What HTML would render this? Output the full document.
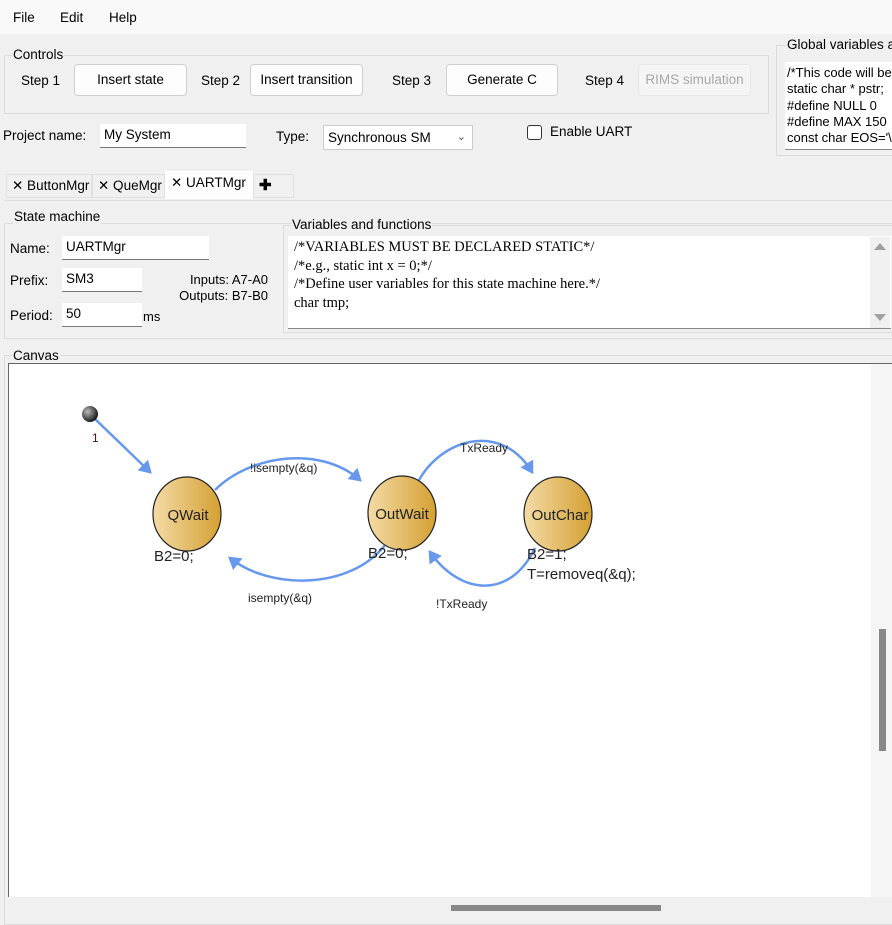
<!DOCTYPE html>
<html><head><style>
*{box-sizing:border-box}
body{margin:0;width:892px;height:920px;background:#f0f0f0;font-family:"Liberation Sans",sans-serif;font-size:13.5px;color:#000;position:relative;overflow:hidden}
div{white-space:nowrap}
.a{position:absolute}
.btn{position:absolute;background:#fdfdfd;border:1px solid #d0d0d0;border-radius:4px;text-align:center;line-height:30px;font-size:13.5px}
.gb{position:absolute;border:1px solid #dcdcdc}
.gl{position:absolute;background:#f0f0f0;padding:0 1px;font-size:13.5px;line-height:14px}
.in{position:absolute;background:#fff;border-bottom:1px solid #7a7a7a;padding-left:4px;font-size:13.5px}
.tab{position:absolute;top:174px;height:24px;border:1px solid #e0e0e0;background:#f0f0f0;font-size:13.5px;line-height:22px;padding-left:5px;overflow:hidden}
.serif{font-family:"Liberation Serif",serif;font-size:14.5px;line-height:18.5px}
</style></head><body>
<div class="a" style="left:0;top:0;width:892px;height:34px;background:#f9f9f9"></div>
<div class="a" style="left:13px;top:10px">File</div>
<div class="a" style="left:60px;top:10px">Edit</div>
<div class="a" style="left:109px;top:10px">Help</div>

<div class="gb" style="left:4px;top:55px;width:765px;height:59px"></div>
<div class="gl" style="left:12px;top:48px">Controls</div>
<div class="a" style="left:21px;top:73px">Step 1</div>
<div class="btn" style="left:74px;top:64px;width:113px;height:32px">Insert state</div>
<div class="a" style="left:201px;top:73px">Step 2</div>
<div class="btn" style="left:250px;top:64px;width:113px;height:32px">Insert transition</div>
<div class="a" style="left:392px;top:73px">Step 3</div>
<div class="btn" style="left:446px;top:64px;width:112px;height:32px">Generate C</div>
<div class="a" style="left:585px;top:73px">Step 4</div>
<div class="btn" style="left:638px;top:64px;width:113px;height:32px;background:#f5f5f5;border-color:#e6e6e6;color:#a8a8a8">RIMS simulation</div>

<div class="gb" style="left:776px;top:45px;width:130px;height:111px"></div>
<div class="gl" style="left:786px;top:38px">Global variables and</div>
<div class="a" style="left:785px;top:62px;width:107px;height:88px;background:#fff;border-bottom:1px solid #888;font-size:13px;line-height:16.3px;padding:3px 0 0 2px;overflow:hidden">/*This code will be<br>static char * pstr;<br>#define NULL 0<br>#define MAX 150<br>const char EOS='\</div>

<div class="a" style="left:3px;top:128px">Project name:</div>
<div class="in" style="left:100px;top:124px;width:146px;height:24px;line-height:22px">My System</div>
<div class="a" style="left:276px;top:129px">Type:</div>
<div class="a" style="left:323px;top:125px;width:150px;height:25px;background:#fff;border:1px solid #ccc;line-height:23px;padding-left:4px">Synchronous SM<span style="position:absolute;right:6px;top:0;color:#555;font-size:11px">&#8964;</span></div>
<div class="a" style="left:527px;top:125px;width:15px;height:15px;border:1px solid #333;border-radius:3px;background:#fff"></div>
<div class="a" style="left:550px;top:124px">Enable UART</div>

<div class="tab" style="left:6px;width:86px">✕ ButtonMgr</div>
<div class="tab" style="left:92px;width:73px">✕ QueMgr</div>
<div class="tab" style="left:165px;top:171px;height:28px;width:88px;background:#fff;border-color:#fff">✕ UARTMgr</div>
<div class="tab" style="left:253px;width:41px;font-weight:bold;font-size:15px">✚</div>
<div class="a" style="left:4px;top:200px;width:888px;height:1px;background:#ddd"></div>

<div class="gb" style="left:4px;top:223px;width:900px;height:116px"></div>
<div class="gl" style="left:13px;top:210px">State machine</div>
<div class="a" style="left:10px;top:241px">Name:</div>
<div class="in" style="left:62px;top:236px;width:147px;height:24px;line-height:22px">UARTMgr</div>
<div class="a" style="left:10px;top:273px">Prefix:</div>
<div class="in" style="left:62px;top:268px;width:80px;height:24px;line-height:22px">SM3</div>
<div class="a" style="left:10px;top:308px">Period:</div>
<div class="in" style="left:62px;top:303px;width:80px;height:24px;line-height:22px">50</div>
<div class="a" style="left:143px;top:309px;font-size:13px">ms</div>
<div class="a" style="left:170px;top:272px;width:98px;text-align:right;font-size:13px;line-height:16px">Inputs: A7-A0<br>Outputs: B7-B0</div>

<div class="gb" style="left:283px;top:225px;width:620px;height:108px"></div>
<div class="gl" style="left:291px;top:218px">Variables and functions</div>
<div class="a serif" style="left:288px;top:236px;width:603px;height:93px;background:#fff;border-bottom:1px solid #888;padding:2px 0 0 6px">/*VARIABLES MUST BE DECLARED STATIC*/<br>/*e.g., static int x = 0;*/<br>/*Define user variables for this state machine here.*/<br>char tmp;</div>
<div class="a" style="left:870px;top:237px;width:20px;height:91px;background:#f0f0f0"></div>
<div class="a" style="left:874px;top:243px;width:0;height:0;border:6px solid transparent;border-bottom:7px solid #a0a0a0;border-top:0"></div>
<div class="a" style="left:874px;top:314px;width:0;height:0;border:6px solid transparent;border-top:7px solid #a0a0a0;border-bottom:0"></div>

<div class="gb" style="left:4px;top:355px;width:900px;height:570px"></div>
<div class="gl" style="left:12px;top:349px">Canvas</div>
<div class="a" style="left:8px;top:363px;width:884px;height:534px;background:#fff;border-top:1px solid #666;border-left:1px solid #666"></div>
<div class="a" style="left:871px;top:364px;width:21px;height:533px;background:#f5f5f5"></div>
<div class="a" style="left:879px;top:629px;width:7px;height:122px;background:#888"></div>
<div class="a" style="left:9px;top:897px;width:883px;height:23px;background:#f0f0f0"></div>
<div class="a" style="left:451px;top:905px;width:210px;height:6px;background:#888"></div>

<svg class="a" style="left:0;top:0" width="892" height="920">
<defs>
<radialGradient id="dot" cx="0.35" cy="0.35" r="0.7"><stop offset="0" stop-color="#bbb"/><stop offset="1" stop-color="#111"/></radialGradient>
<linearGradient id="st" x1="0" x2="1"><stop offset="0" stop-color="#f4dba6"/><stop offset="1" stop-color="#d4a032"/></linearGradient>
<marker id="ar" markerWidth="6" markerHeight="6" refX="4" refY="3" orient="auto" markerUnits="strokeWidth"><path d="M0,0 L5,3 L0,6 z" fill="#6699ee"/></marker>
</defs>
<g fill="none" stroke="#6699ee" stroke-width="2.5" marker-end="url(#ar)">
<path d="M94,418 L150,472"/>
<path d="M215,490 C250,455 320,445 360,480"/>
<path d="M385,545 C350,590 270,590 230,558"/>
<path d="M418,482 C440,440 500,420 532,472"/>
<path d="M535,548 C510,600 460,595 430,552"/>
</g>
<circle cx="90" cy="414" r="8" fill="url(#dot)"/>
<g stroke="#222" stroke-width="1.2" fill="url(#st)">
<ellipse cx="187" cy="514" rx="34" ry="37"/>
<ellipse cx="402" cy="513" rx="34" ry="37"/>
<ellipse cx="558" cy="514" rx="34" ry="37"/>
</g>
<g font-family="Liberation Sans,sans-serif" font-size="15" text-anchor="middle" fill="#222">
<text x="188" y="520">QWait</text><text x="402" y="519">OutWait</text><text x="560" y="520">OutChar</text>
</g>
<g font-family="Liberation Sans,sans-serif" font-size="15" fill="#222">
<text x="154" y="561">B2=0;</text><text x="368" y="558">B2=0;</text><text x="527" y="559">B2=1;</text><text x="527" y="579">T=removeq(&amp;q);</text>
</g>
<g font-family="Liberation Sans,sans-serif" font-size="12" fill="#222">
<text x="92" y="442" fill="#5a1010">1</text>
<text x="250" y="472">!isempty(&amp;q)</text>
<text x="248" y="602">isempty(&amp;q)</text>
<text x="460" y="452">TxReady</text>
<text x="436" y="608">!TxReady</text>
</g>
</svg>
</body></html>
